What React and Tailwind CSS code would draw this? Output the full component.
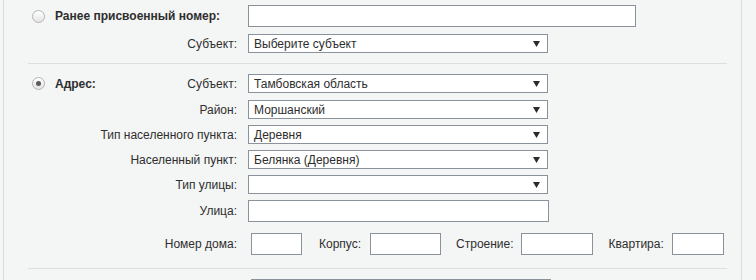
import React from "react";

function Radio({ checked }) {
  return (
    <span className="flex h-[13px] w-[13px] items-center justify-center rounded-full border border-[#b4b4b4] bg-gradient-to-b from-[#ffffff] to-[#e4e4e4]">
      {checked && <span className="h-[5px] w-[5px] rounded-full bg-[#5a5a5a]" />}
    </span>
  );
}

function Select({ value }) {
  return (
    <div className="flex h-[19px] w-[300px] items-center justify-between border border-[#8a939b] bg-white pl-[5px] pr-[7px]">
      <span className="leading-none">{value}</span>
      <svg width="7" height="6" viewBox="0 0 7 6">
        <polygon points="0,0 7,0 3.5,6" fill="#2b2b2b" />
      </svg>
    </div>
  );
}

function Row({ label, children, left, className = "" }) {
  return (
    <div className={`flex items-center ${className}`}>
      <div className="flex w-[209px] shrink-0 items-center justify-between">
        <div className="flex items-center">{left}</div>
        <span>{label}</span>
      </div>
      <div className="ml-[11px]">{children}</div>
    </div>
  );
}

function Heading({ checked, text }) {
  return (
    <>
      <span className="ml-[4px]">
        <Radio checked={checked} />
      </span>
      <span className="ml-[10px] font-bold">{text}</span>
    </>
  );
}

function Small({ w }) {
  return <div className={`h-[22px] border border-[#8a939b] bg-white ${w}`} />;
}

export default function App() {
  return (
    <div className="h-[280px] overflow-hidden bg-[#f4f5f5] font-['Liberation_Sans',Arial,sans-serif] text-[12px] text-[#2e2e2e]">
      <div className="ml-[3px] w-[739px] border-x border-[#d9dcdc] min-h-[300px]">
        <div className="pl-[24px] pr-[14px]">
          {/* Ранее присвоенный номер */}
          <div className="flex flex-col pt-[5px]">
            <Row left={<Heading text="Ранее присвоенный номер:" />}>
              <div className="h-[22px] w-[388px] border border-[#8a939b] bg-white" />
            </Row>
            <Row label="Субъект:" className="mt-[7px]">
              <Select value="Выберите субъект" />
            </Row>
          </div>

          <div className="mt-[10px] h-px bg-[#dcdfdf]" />

          {/* Адрес */}
          <div className="flex flex-col pt-[10px]">
            <Row label="Субъект:" left={<Heading checked text="Адрес:" />}>
              <Select value="Тамбовская область" />
            </Row>
            <Row label="Район:" className="mt-[7px]">
              <Select value="Моршанский" />
            </Row>
            <Row label="Тип населенного пункта:" className="mt-[6px]">
              <Select value="Деревня" />
            </Row>
            <Row label="Населенный пункт:" className="mt-[6px]">
              <Select value="Белянка (Деревня)" />
            </Row>
            <Row label="Тип улицы:" className="mt-[6px]">
              <Select value="" />
            </Row>
            <Row label="Улица:" className="mt-[6px]">
              <div className="h-[22px] w-[301px] border border-[#8a939b] bg-white" />
            </Row>
            <div className="mt-[11px] flex items-center">
              <span className="w-[209px] shrink-0 text-right">Номер дома:</span>
              <div className="ml-[14px]">
                <Small w="w-[51px]" />
              </div>
              <span className="ml-[17px]">Корпус:</span>
              <div className="ml-[9px]">
                <Small w="w-[71px]" />
              </div>
              <span className="ml-[15px]">Строение:</span>
              <div className="ml-[7px]">
                <Small w="w-[72px]" />
              </div>
              <span className="ml-[16px]">Квартира:</span>
              <div className="ml-[8px]">
                <Small w="w-[52px]" />
              </div>
            </div>
          </div>

          <div className="mt-[13px] h-px bg-[#dcdfdf]" />

          <div className="ml-[223px] mt-[10px] h-[22px] w-[300px] border border-[#8a939b] bg-white" />
        </div>
      </div>
    </div>
  );
}
